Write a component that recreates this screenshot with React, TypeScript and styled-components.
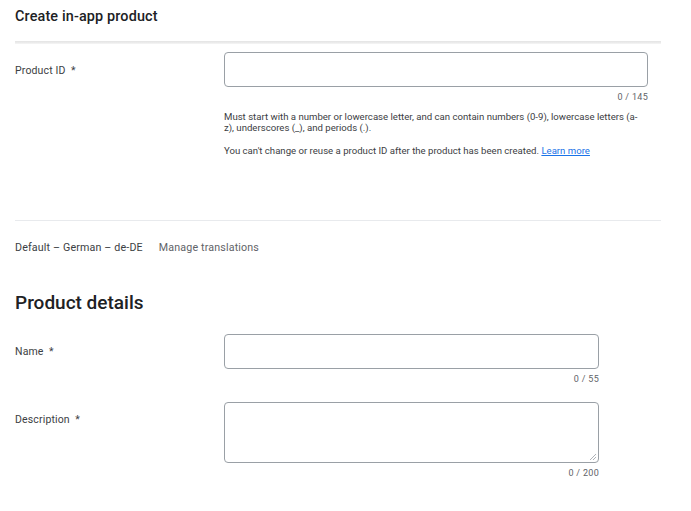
import React from "react";
import styled, { createGlobalStyle } from "styled-components";

const Global = createGlobalStyle`
  html, body { margin: 0; padding: 0; background: #fff; }
  body { font-family: Roboto, "Noto Sans", Arial, sans-serif; color: #202124; }
  * { box-sizing: border-box; }
`;

const Page = styled.div`
  width: 691px;
  padding: 0 30px 0 15px;
`;

const Header = styled.div`
  height: 41px;
  padding-top: 8px;
  font-size: 14.4px;
  font-weight: 500;
  color: #202124;
  letter-spacing: 0.15px;
`;

const HeaderRule = styled.div`
  height: 3px;
  background: linear-gradient(#e4e4e4, #ececec 60%, #f6f6f6);
`;

const Row = styled.div<{ $top: number }>`
  display: grid;
  grid-template-columns: 209px 1fr;
  padding-top: ${(p) => p.$top}px;
`;

const Label = styled.div<{ $top: number }>`
  font-size: 10.5px;
  color: #3c4043;
  padding-top: ${(p) => p.$top}px;
  letter-spacing: 0.15px;
`;

const Field = styled.div<{ $width: number }>`
  width: ${(p) => p.$width}px;
  display: flex;
  flex-direction: column;
`;

const Box = styled.div<{ $height: number }>`
  position: relative;
  height: ${(p) => p.$height}px;
  border: 1px solid #9aa0a6;
  border-radius: 4px;
  background: #fff;
`;

const Grip = styled.svg`
  position: absolute;
  right: 1px;
  bottom: 1px;
`;

const Counter = styled.div`
  text-align: right;
  font-size: 9px;
  color: #5f6368;
  margin-top: 5px;
  letter-spacing: 0.3px;
`;

const Hint = styled.p<{ $top: number }>`
  margin: ${(p) => p.$top}px 0 0;
  font-size: 9.6px;
  line-height: 11px;
  color: #3c4043;
  padding-right: 2px;
`;

const Link = styled.a`
  color: #1a73e8;
  text-decoration: underline;
`;

const Rule = styled.div<{ $top: number }>`
  margin-top: ${(p) => p.$top}px;
  height: 1px;
  background: #e8eaed;
`;

const LangBar = styled.div`
  display: flex;
  gap: 16px;
  padding-top: 20px;
  font-size: 10.7px;
  color: #3c4043;
  letter-spacing: 0.15px;
`;

const Muted = styled.span`
  color: #5f6368;
`;

const SectionTitle = styled.h2`
  margin: 38px 0 0;
  font-size: 19px;
  font-weight: 500;
  color: #202124;
  line-height: 22px;
`;

type FieldProps = {
  label: string;
  width: number;
  height: number;
  count: string;
  top: number;
  labelTop: number;
  resizable?: boolean;
  children?: React.ReactNode;
};

function FormRow({ label, width, height, count, top, labelTop, resizable, children }: FieldProps) {
  return (
    <Row $top={top}>
      <Label $top={labelTop}>{label}&nbsp; *</Label>
      <Field $width={width}>
        <Box $height={height}>
          {resizable && (
            <Grip width="8" height="8" viewBox="0 0 8 8">
              <path d="M7 1 L1 7 M7 4 L4 7" stroke="#9aa0a6" strokeWidth="0.8" fill="none" />
            </Grip>
          )}
        </Box>
        <Counter>{count}</Counter>
        {children}
      </Field>
    </Row>
  );
}

export default function App() {
  return (
    <Page>
      <Global />
      <Header>Create in-app product</Header>
      <HeaderRule />
      <FormRow label="Product ID" width={424} height={35} count="0 / 145" top={8} labelTop={12}>
        <Hint $top={9}>
          Must start with a number or lowercase letter, and can contain numbers (0-9), lowercase letters (a-z), underscores (_), and periods (.).
        </Hint>
        <Hint $top={12}>
          You can't change or reuse a product ID after the product has been created. <Link href="#">Learn more</Link>
        </Hint>
      </FormRow>
      <Rule $top={64} />
      <LangBar>
        <span>Default – German – de-DE</span>
        <Muted>Manage translations</Muted>
      </LangBar>
      <SectionTitle>Product details</SectionTitle>
      <FormRow label="Name" width={375} height={35} count="0 / 55" top={20} labelTop={11} />
      <FormRow label="Description" width={375} height={61} count="0 / 200" top={18} labelTop={11} resizable />
    </Page>
  );
}
